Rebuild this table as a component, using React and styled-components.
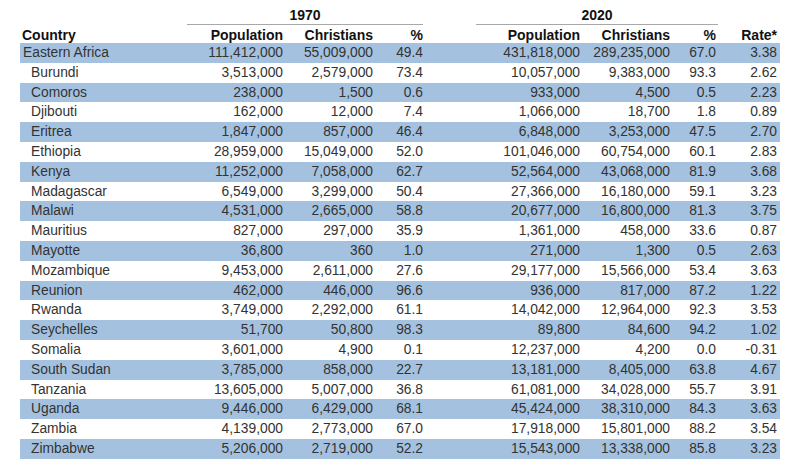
import React from 'react';
import styled, { createGlobalStyle } from 'styled-components';

const GlobalStyle = createGlobalStyle`
  html, body {
    margin: 0;
    padding: 0;
    background: #ffffff;
  }
  body {
    font-family: "Liberation Sans", Arial, sans-serif;
  }
`;

const Page = styled.div`
  width: 800px;
  height: 476px;
  padding-left: 20px;
  box-sizing: border-box;
  background: #fff;
`;

const Table = styled.table`
  width: 760px;
  table-layout: fixed;
  border-collapse: collapse;
  border-spacing: 0;
  font-size: 13.8px;
  color: #333;
`;

const YearRow = styled.tr`
  height: 25px;
`;

const YearCell = styled.th`
  padding: 0;
  vertical-align: bottom;
`;

const YearLabel = styled.div`
  margin-right: ${p => p.$inset || 0}px;
  padding-bottom: 1px;
  border-bottom: 1px solid #a8a8a8;
  font-size: 14px;
  font-weight: bold;
  color: #111;
  text-align: center;
`;

const LabelRow = styled.tr`
  height: 18px;
`;

const HeadCell = styled.th`
  padding: 0 3px 0 ${p => (p.$left ? '2px' : '0')};
  font-size: 14px;
  font-weight: bold;
  color: #111;
  text-align: ${p => (p.$left ? 'left' : 'right')};
  white-space: nowrap;
  vertical-align: bottom;
  line-height: 16px;
`;

const DataRow = styled.tr`
  height: 19.8px;
  background: ${p => (p.$striped ? '#a4c2e0' : 'transparent')};
`;

const CountryCell = styled.td`
  padding: 0 0 0 ${p => (p.$region ? '3px' : '11px')};
  white-space: nowrap;
  line-height: 19.8px;
`;

const NumCell = styled.td`
  padding: 0 3px 0 0;
  text-align: right;
  white-space: nowrap;
  line-height: 19.8px;
`;

const rows = [
  ['Eastern Africa', '111,412,000', '55,009,000', '49.4', '431,818,000', '289,235,000', '67.0', '3.38'],
  ['Burundi', '3,513,000', '2,579,000', '73.4', '10,057,000', '9,383,000', '93.3', '2.62'],
  ['Comoros', '238,000', '1,500', '0.6', '933,000', '4,500', '0.5', '2.23'],
  ['Djibouti', '162,000', '12,000', '7.4', '1,066,000', '18,700', '1.8', '0.89'],
  ['Eritrea', '1,847,000', '857,000', '46.4', '6,848,000', '3,253,000', '47.5', '2.70'],
  ['Ethiopia', '28,959,000', '15,049,000', '52.0', '101,046,000', '60,754,000', '60.1', '2.83'],
  ['Kenya', '11,252,000', '7,058,000', '62.7', '52,564,000', '43,068,000', '81.9', '3.68'],
  ['Madagascar', '6,549,000', '3,299,000', '50.4', '27,366,000', '16,180,000', '59.1', '3.23'],
  ['Malawi', '4,531,000', '2,665,000', '58.8', '20,677,000', '16,800,000', '81.3', '3.75'],
  ['Mauritius', '827,000', '297,000', '35.9', '1,361,000', '458,000', '33.6', '0.87'],
  ['Mayotte', '36,800', '360', '1.0', '271,000', '1,300', '0.5', '2.63'],
  ['Mozambique', '9,453,000', '2,611,000', '27.6', '29,177,000', '15,566,000', '53.4', '3.63'],
  ['Reunion', '462,000', '446,000', '96.6', '936,000', '817,000', '87.2', '1.22'],
  ['Rwanda', '3,749,000', '2,292,000', '61.1', '14,042,000', '12,964,000', '92.3', '3.53'],
  ['Seychelles', '51,700', '50,800', '98.3', '89,800', '84,600', '94.2', '1.02'],
  ['Somalia', '3,601,000', '4,900', '0.1', '12,237,000', '4,200', '0.0', '-0.31'],
  ['South Sudan', '3,785,000', '858,000', '22.7', '13,181,000', '8,405,000', '63.8', '4.67'],
  ['Tanzania', '13,605,000', '5,007,000', '36.8', '61,081,000', '34,028,000', '55.7', '3.91'],
  ['Uganda', '9,446,000', '6,429,000', '68.1', '45,424,000', '38,310,000', '84.3', '3.63'],
  ['Zambia', '4,139,000', '2,773,000', '67.0', '17,918,000', '15,801,000', '88.2', '3.54'],
  ['Zimbabwe', '5,206,000', '2,719,000', '52.2', '15,543,000', '13,338,000', '85.8', '3.23'],
];

const widths = [167, 99, 90, 50, 50, 107, 90, 46, 61];

export default function App() {
  return (
    <Page>
      <GlobalStyle />
      <Table>
        <colgroup>
          {widths.map((w, i) => (
            <col key={i} style={{ width: w }} />
          ))}
        </colgroup>
        <thead>
          <YearRow>
            <YearCell />
            <YearCell colSpan={3}>
              <YearLabel $inset={3}>1970</YearLabel>
            </YearCell>
            <YearCell />
            <YearCell colSpan={3}>
              <YearLabel $inset={1}>2020</YearLabel>
            </YearCell>
            <YearCell />
          </YearRow>
          <LabelRow>
            <HeadCell $left>Country</HeadCell>
            <HeadCell>Population</HeadCell>
            <HeadCell>Christians</HeadCell>
            <HeadCell>%</HeadCell>
            <HeadCell />
            <HeadCell>Population</HeadCell>
            <HeadCell>Christians</HeadCell>
            <HeadCell>%</HeadCell>
            <HeadCell>Rate*</HeadCell>
          </LabelRow>
        </thead>
        <tbody>
          {rows.map((r, i) => (
            <DataRow key={r[0]} $striped={i % 2 === 0}>
              <CountryCell $region={i === 0}>{r[0]}</CountryCell>
              <NumCell>{r[1]}</NumCell>
              <NumCell>{r[2]}</NumCell>
              <NumCell>{r[3]}</NumCell>
              <NumCell />
              <NumCell>{r[4]}</NumCell>
              <NumCell>{r[5]}</NumCell>
              <NumCell>{r[6]}</NumCell>
              <NumCell>{r[7]}</NumCell>
            </DataRow>
          ))}
        </tbody>
      </Table>
    </Page>
  );
}
